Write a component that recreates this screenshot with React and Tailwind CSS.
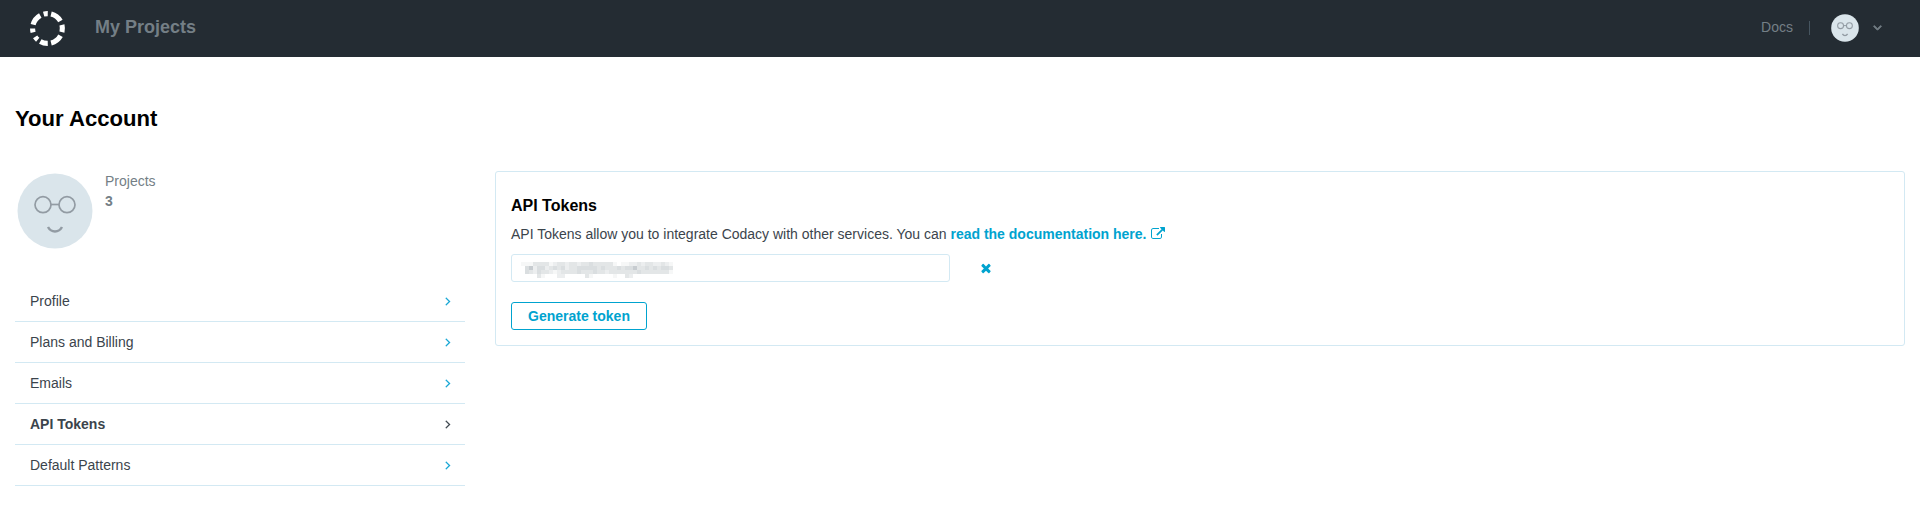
const ICONS = {
  external:
    'M1408 928v320q0 119-84.5 203.5t-203.5 84.5h-832q-119 0-203.5-84.5t-84.5-203.5v-832q0-119 84.5-203.5t203.5-84.5h704q14 0 23 9t9 23v64q0 14-9 23t-23 9h-704q-66 0-113 47t-47 113v832q0 66 47 113t113 47h832q66 0 113-47t47-113v-320q0-14 9-23t23-9h64q14 0 23 9t9 23zm384-864v512q0 26-19 45t-45 19-45-19l-176-176-652 652q-10 10-23 10t-23-10l-114-114q-10-10-10-23t10-23l652-652-176-176q-19-19-19-45t19-45 45-19h512q26 0 45 19t19 45z',
  times:
    'M1490 1322q0 40-28 68l-136 136q-28 28-68 28t-68-28l-294-294-294 294q-28 28-68 28t-68-28l-136-136q-28-28-28-68t28-68l294-294-294-294q-28-28-28-68t28-68l136-136q28-28 68-28t68 28l294 294 294-294q28-28 68-28t68 28l136 136q28 28 28 68t-28 68l-294 294 294 294q28 28 28 68z',
  right:
    'M1171 960q0 13-10 23l-466 466q-10 10-23 10t-23-10l-50-50q-10-10-10-23t10-23l393-393-393-393q-10-10-10-23t10-23l50-50q10-10 23-10t23 10l466 466q10 10 10 23z',
};

function Icon({ name, className }) {
  return (
    <svg viewBox="0 0 1792 1792" className={className} fill="currentColor" aria-hidden="true">
      <path d={ICONS[name]} />
    </svg>
  );
}

// Ring segments of the logo, in degrees clockwise from the top.
const SEGMENTS = [
  [-15, 1],
  [14, 60],
  [76, 104],
  [119, 166],
  [179, 209],
  [221, 236],
  [255, 270],
  [285, 331],
];

function arc([from, to]) {
  const at = (deg) => {
    const a = (deg * Math.PI) / 180;
    return `${18.5 + 14.9 * Math.sin(a)} ${17.5 - 14.9 * Math.cos(a)}`;
  };
  return `M${at(from)}A14.9 14.9 0 0 1 ${at(to)}`;
}

function Logo() {
  return (
    <svg viewBox="0 0 37 36" className="h-9 w-[37px]" fill="none" stroke="#fff" strokeWidth="5.1" aria-hidden="true">
      {SEGMENTS.map((s) => (
        <path key={s[0]} d={arc(s)} />
      ))}
    </svg>
  );
}

function Avatar({ className, line = 1.7 }) {
  return (
    <svg viewBox="0 0 76 76" className={className} fill="none" stroke="#929ba3" aria-hidden="true">
      <circle cx="38" cy="38" r="37.5" fill="#dae5eb" stroke="none" />
      <circle cx="26" cy="31.700" r="8" strokeWidth={line} />
      <circle cx="50" cy="31.700" r="8" strokeWidth={line} />
      <path d="M34 31.500h8" strokeWidth={line} />
      <path d="M31 54q2.500 4.500 7 4.500t7-4.500" strokeWidth={line + 0.8} />
    </svg>
  );
}

// Grey levels of the masked token, one digit per 4px cell (0 = blank, 9 = darkest).
const MASK = [
  '11133331233233233433333101122323322321',
  '04624423434233444443433343446334343443',
  '04324332123333433343323333333433333331',
  '00003100022000003100000100320000000000',
];

function MaskedToken() {
  return (
    <svg viewBox="0 0 152 16" className="h-4 w-[152px]" shapeRendering="crispEdges" aria-label="Hidden token">
      {MASK.flatMap((row, y) =>
        [...row].map((level, x) => (
          <rect key={`${x}-${y}`} x={x * 4} y={y * 4} width="4" height="4" fill="#65737c" opacity={Number(level) * 0.06} />
        )),
      )}
    </svg>
  );
}

const MENU = ['Profile', 'Plans and Billing', 'Emails', 'API Tokens', 'Default Patterns'];

export default function App() {
  return (
    <div className="h-[527px] bg-white font-['Liberation_Sans',Arial,sans-serif] text-sm leading-5 text-[#3b444c]">
      <header className="flex h-[57px] items-start bg-[#242c33] pl-[29px] pr-[35px] text-[#747f86]">
        <div className="mt-[11px]">
          <Logo />
        </div>
        <div className="mt-[15px] ml-[29px] text-lg leading-6 font-bold">My Projects</div>
        <div className="mt-3.5 ml-auto flex h-7 items-center">
          <span className="-mt-[3px]">Docs</span>
          <span className="ml-4 h-3.5 w-px bg-[#465560]" />
          <Avatar className="mr-3 ml-[21px] size-7" line={2.8} />
          <Icon name="right" className="size-3.5 rotate-90 stroke-current stroke-[120]" />
        </div>
      </header>

      <h1 className="mt-12 ml-[15px] text-[22.100px] leading-7 font-bold text-black">Your Account</h1>

      <main className="mt-[38px] flex items-start px-[15px]">
        <aside className="w-[450px]">
          <div className="flex h-[110px] pl-0.5">
            <Avatar className="mt-0.5 size-[76px]" />
            <div className="ml-3 text-[#747f86]">
              <div>Projects</div>
              <div className="font-bold">3</div>
            </div>
          </div>
          <ul>
            {MENU.map((item) => (
              <li
                key={item}
                className="flex h-[41px] items-center justify-between border-b border-[#d3e9f3] pr-[10.500px] pl-[15px]"
              >
                <span className={item === 'API Tokens' ? 'font-bold' : ''}>{item}</span>
                <Icon
                  name="right"
                  className={
                    item === 'API Tokens'
                      ? 'size-3.5 stroke-current stroke-[30]'
                      : 'size-3.5 stroke-current stroke-[30] text-[#12a5d3]'
                  }
                />
              </li>
            ))}
          </ul>
        </aside>

        <section className="ml-[30px] h-[175px] flex-1 rounded-[3px] border border-[#d3e9f3] px-[15px] pt-6">
          <h2 className="text-base leading-5 font-bold text-black">API Tokens</h2>
          <p className="mt-2 flex items-center">
            <span className="whitespace-pre">API Tokens allow you to integrate Codacy with other services. You can </span>
            <a className="flex items-center font-bold text-[#00a3cf]">
              read the documentation here.
              <Icon name="external" className="ml-[4.500px] size-3.5" />
            </a>
          </p>
          <div className="mt-2.5 flex items-center">
            <div className="flex h-7 w-[439px] items-center rounded-[3px] border border-[#d3e9f3] pt-[3px] pl-[9px]">
              <MaskedToken />
            </div>
            <Icon name="times" className="ml-[29px] size-3.5 text-[#00a3cf]" />
          </div>
          <button className="mt-5 h-7 w-[136px] rounded-[3px] border border-[#00a3cf] font-bold text-[#00a3cf]">
            Generate token
          </button>
        </section>
      </main>
    </div>
  );
}
